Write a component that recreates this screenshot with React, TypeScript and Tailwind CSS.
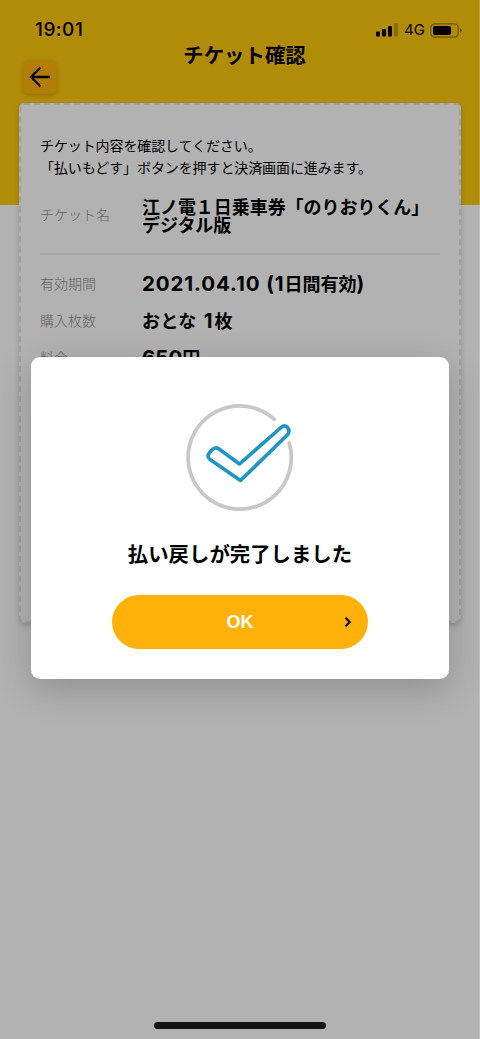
import type { ReactNode } from "react";

function Num({ children }: { children: ReactNode }) {
  return <span className="font-['Inter'] text-[20.5px] leading-none font-bold">{children}</span>;
}

function Row({ label, children }: { label: string; children: ReactNode }) {
  return (
    <div className="flex h-[37px] items-center">
      <span className="w-[102px] shrink-0 text-[14px] font-light text-[#626262]">{label}</span>
      <span className="pt-px text-[18px] leading-[18px] font-bold whitespace-nowrap">{children}</span>
    </div>
  );
}

function StatusBar() {
  return (
    <div className="flex h-[60px] items-center justify-between pr-[18px] pl-[35px] font-['Inter']">
      <span className="text-[19px] font-medium tracking-[0.5px]">19:01</span>
      <div className="flex items-center gap-[6px]">
        <svg width="22" height="14" viewBox="0 0 22 14">
          <rect x="0" y="8.5" width="4" height="5" rx="1" />
          <rect x="6" y="6" width="4" height="7.5" rx="1" />
          <rect x="12" y="3" width="4" height="10.5" rx="1" />
          <rect x="18" y="0" width="4" height="13.5" rx="1" opacity=".22" />
        </svg>
        <span className="-mr-px w-[21px] text-[15px]">4G</span>
        <svg width="32" height="15" viewBox="0 0 32 15">
          <rect x=".8" y=".8" width="27.4" height="13.4" rx="4" fill="none" stroke="#000" strokeOpacity=".4" strokeWidth="1.2" />
          <rect x="3" y="3" width="18" height="9" rx="2" />
          <path d="M30 5v5q3-2.5 0-5" opacity=".5" />
        </svg>
      </div>
    </div>
  );
}

export default function App() {
  return (
    <div className="relative h-[1039px] w-[480px] overflow-hidden bg-[#b2b2b2] font-['Noto_Sans_CJK_JP',sans-serif] text-black">
      <header className="h-[205px] bg-[#b18c08]">
        <StatusBar />
        <h1 className="-mt-[18px] pl-[9px] text-center text-[20.4px] leading-[24px] font-bold">チケット確認</h1>
        <button className="-mt-[6px] ml-[23px] flex h-[34px] w-[34px] items-center justify-center rounded-[6px] bg-[#b27d08] shadow-[0_2px_4px_rgba(0,0,0,0.16)]" aria-label="戻る">
          <svg width="22" height="22" viewBox="0 0 22 22" fill="none" stroke="#000" strokeWidth="2.4">
            <path d="M11.5 1.5 2 11l9.5 9.5M2 11h19" />
          </svg>
        </button>
      </header>
      <main className="relative mx-[19px] -mt-[102px] h-[520px] rounded-[5px] border-2 border-dashed border-[#a0a0a0] bg-[#b2b2b2] px-[19px] pt-[29px] shadow-[0_2px_5px_rgba(0,0,0,0.18)]">
        <p className="text-[14px] leading-[22px] tracking-[-0.1px] whitespace-nowrap">チケット内容を確認してください。<br />「払いもどす」ボタンを押すと決済画面に進みます。</p>
        <div className="mt-[19px] flex h-[58px] items-start border-b-2 border-[#a7a7a7]">
          <span className="mt-[7px] w-[102px] shrink-0 text-[14px] leading-[20px] font-light text-[#626262]">チケット名</span>
          <span className="text-[18px] leading-[18px] font-bold tracking-[-0.05px] whitespace-nowrap"><span className="block">江ノ電１日乗車券「のりおりくん」</span><span className="block tracking-[-0.1px]">デジタル版</span></span>
        </div>
        <div className="pt-[10px]">
          <Row label="有効期間"><span className="tracking-[0.9px]"><Num>2021.04.10 (1</Num></span>日間有効<Num>)</Num></Row>
          <Row label="購入枚数"><span className="tracking-[0.4px]">おとな</span><span className="mr-[2px] ml-[7px]"><Num>1</Num></span>枚</Row>
          <Row label="料金"><Num>650</Num>円</Row>
        </div>
      </main>
      <section className="absolute top-[357px] left-[31px] flex h-[322px] w-[418px] flex-col items-center rounded-[9px] bg-white pt-[45px] shadow-[0_10px_36px_rgba(0,0,0,0.2)]">
        <svg width="112" height="112" viewBox="184 402 112 112" fill="none" strokeLinecap="round" strokeLinejoin="round">
          <path d="M274.4 419.3A51.6 51.6 0 1 0 289.3 443.2" stroke="#c8c8c8" strokeWidth="3.8" />
          <path d="M209 453.5L212.2 449.8Q215.3 446.5 219 449L239.5 464L281 427.5Q284.5 424.5 287.5 427.3Q290.5 431 287.3 435L240.5 480.5L210 459.5Q206.6 456.6 209 453.5Z" stroke="#1d96c3" strokeWidth="3.6" />
        </svg>
        <h2 className="mt-[25px] text-[20.4px] leading-[28px] font-bold whitespace-nowrap">払い戻しが完了しました</h2>
        <button className="relative mt-[28px] flex h-[54px] w-[256px] items-center justify-center rounded-full bg-[#ffb10a] pt-px font-['Liberation_Sans'] text-[18px] font-bold text-white">
          OK
          <svg className="absolute top-[22px] right-[16px]" width="8" height="10" viewBox="0 0 8 10" fill="none" stroke="#000" strokeWidth="2">
            <path d="m1.5.8 4.3 4.2-4.3 4.2" />
          </svg>
        </button>
      </section>
      <div className="absolute bottom-[10px] left-[154px] h-[7px] w-[172px] rounded-full bg-[#141414]" />
      <div className="absolute top-0 right-0 h-full w-px bg-white/20" />
    </div>
  );
}
